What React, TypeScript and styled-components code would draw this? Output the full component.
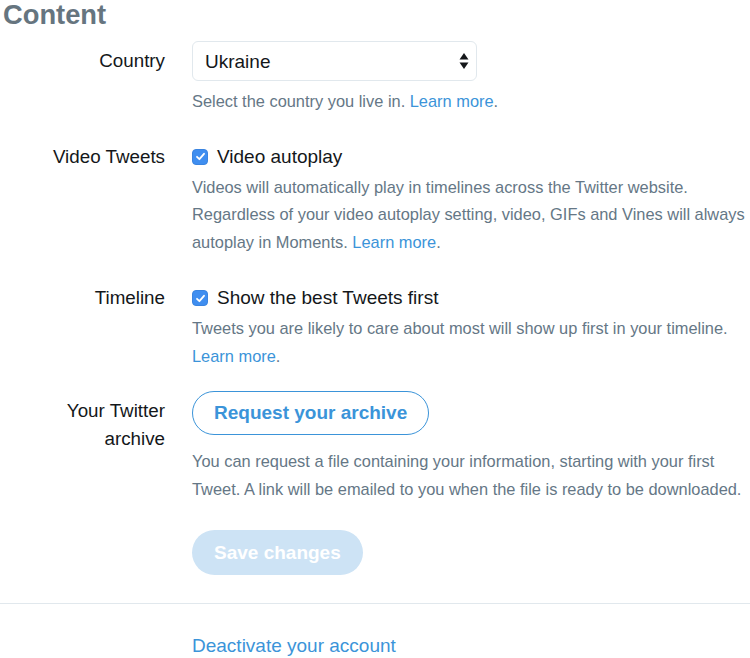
import React from 'react';
import styled, { createGlobalStyle } from 'styled-components';

const GlobalStyle = createGlobalStyle`
  * {
    box-sizing: border-box;
  }

  body {
    margin: 0;
    background: #ffffff;
    font-family: 'Liberation Sans', Arial, Helvetica, sans-serif;
  }
`;

const LINK = '#3b94d9';

const Check = () => (
  <CheckBox>
    <svg width="11" height="11" viewBox="0 0 11 11">
      <path
        d="M2 5.8 L4.4 8.2 L9 2.8"
        fill="none"
        stroke="#ffffff"
        strokeWidth="1.8"
        strokeLinecap="round"
        strokeLinejoin="round"
      />
    </svg>
  </CheckBox>
);

const App = () => {
  return (
    <>
      <GlobalStyle />
      <Page>
        <Heading>Content</Heading>

        <Row>
          <Label $offset={6}>Country</Label>
          <Field>
            <SelectWrap>
              <Select defaultValue="Ukraine">
                <option>Ukraine</option>
              </Select>
              <SelectArrows width="10" height="18" viewBox="0 0 10 18">
                <path d="M5 1 L9.5 7.5 H0.5 Z" fill="#14171a" />
                <path d="M5 17 L9.5 10.5 H0.5 Z" fill="#14171a" />
              </SelectArrows>
            </SelectWrap>
            <Help $top={7}>
              Select the country you live in. <Link href="#">Learn more</Link>.
            </Help>
          </Field>
        </Row>

        <Row>
          <Label>Video Tweets</Label>
          <Field>
            <CheckRow>
              <Check />
              Video autoplay
            </CheckRow>
            <Help $top={3}>
              Videos will automatically play in timelines across the Twitter website.
              Regardless of your video autoplay setting, video, GIFs and Vines will always
              autoplay in Moments. <Link href="#">Learn more</Link>.
            </Help>
          </Field>
        </Row>

        <Row $top={28}>
          <Label>Timeline</Label>
          <Field>
            <CheckRow>
              <Check />
              Show the best Tweets first
            </CheckRow>
            <Help $top={3}>
              Tweets you are likely to care about most will show up first in your timeline.{' '}
              <Link href="#">Learn more</Link>.
            </Help>
          </Field>
        </Row>

        <Row $top={21}>
          <Label $offset={6}>
            Your Twitter
            <br />
            archive
          </Label>
          <Field>
            <OutlineButton>Request your archive</OutlineButton>
            <Help $top={13}>
              You can request a file containing your information, starting with your first
              Tweet. A link will be emailed to you when the file is ready to be downloaded.
            </Help>
            <SaveButton disabled>Save changes</SaveButton>
          </Field>
        </Row>

        <Divider />

        <Row $top={28}>
          <span />
          <Field>
            <BigLink href="#">Deactivate your account</BigLink>
          </Field>
        </Row>
      </Page>
    </>
  );
};

export default App;

const Page = styled.div`
  width: 750px;
  height: 658px;
  overflow: hidden;
`;

const Heading = styled.h2`
  margin: 0 0 13px;
  padding: 1px 0 0 3px;
  font-size: 27.3px;
  line-height: 27px;
  font-weight: 700;
  color: #66757f;
`;

const Row = styled.div<{ $top?: number }>`
  display: grid;
  grid-template-columns: 165px 1fr;
  column-gap: 27px;
  margin-top: ${({ $top }) => $top ?? 27}px;

  &:first-of-type {
    margin-top: 0;
  }
`;

const Label = styled.div<{ $offset?: number }>`
  padding-top: ${({ $offset }) => $offset ?? 0}px;
  text-align: right;
  font-size: 18.8px;
  line-height: 28px;
  color: #14171a;
`;

const Field = styled.div`
  display: flex;
  flex-direction: column;
  align-items: flex-start;
  min-width: 0;
`;

const SelectWrap = styled.div`
  position: relative;
  width: 285px;
`;

const Select = styled.select`
  appearance: none;
  width: 100%;
  height: 40px;
  padding: 0 30px 0 12px;
  border: 1px solid #e1e8ed;
  border-radius: 6px;
  background: #ffffff;
  font-family: inherit;
  font-size: 19px;
  color: #14171a;
  outline: none;
`;

const SelectArrows = styled.svg`
  position: absolute;
  right: 8px;
  top: 11px;
  pointer-events: none;
`;

const Help = styled.p<{ $top?: number }>`
  margin: ${({ $top }) => $top ?? 0}px 0 0;
  width: 558px;
  font-size: 16.4px;
  line-height: 27.5px;
  color: #657786;
`;

const Link = styled.a`
  color: ${LINK};
  text-decoration: none;
`;

const CheckRow = styled.label`
  display: flex;
  align-items: center;
  gap: 9px;
  font-size: 19px;
  line-height: 28px;
  color: #14171a;
`;

const CheckBox = styled.span`
  display: inline-flex;
  align-items: center;
  justify-content: center;
  width: 16px;
  height: 16px;
  border-radius: 4px;
  background: #3f8ef0;
  border: 1px solid #3a84e0;
`;

const OutlineButton = styled.button`
  height: 44px;
  padding: 0 21px;
  border: 1.5px solid ${LINK};
  border-radius: 22px;
  background: #ffffff;
  font-family: inherit;
  font-size: 19px;
  font-weight: 700;
  color: ${LINK};
`;

const SaveButton = styled.button`
  margin-top: 27px;
  height: 45px;
  padding: 0 22px;
  border: none;
  border-radius: 23px;
  background: #cde3f5;
  font-family: inherit;
  font-size: 19px;
  font-weight: 700;
  color: #ffffff;
`;

const Divider = styled.hr`
  margin: 28px 0 0;
  border: none;
  border-top: 1px solid #e1e8ed;
`;

const BigLink = styled.a`
  font-size: 19px;
  line-height: 28px;
  color: ${LINK};
  text-decoration: none;
`;
